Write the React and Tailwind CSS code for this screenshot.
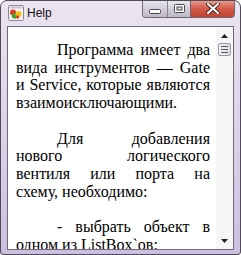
import React from 'react';

function AppIcon() {
    return (
        <svg width="16" height="16" viewBox="0 0 16 16">
            <rect x="0.5" y="0.5" width="15" height="15" rx="1" fill="#f4f2f6" stroke="#8d8a94" />
            <rect x="1.5" y="1.5" width="13" height="2" fill="#c9c4d2" />
            <circle cx="5" cy="7.5" r="3" fill="#e0392b" />
            <circle cx="6.5" cy="11" r="2.7" fill="#3ea33a" />
            <circle cx="10.5" cy="9" r="3" fill="#f2c21b" />
            <circle cx="9.5" cy="12" r="1.8" fill="#d84a22" />
        </svg>
    );
}

function CaptionButtons() {
    return (
        <div className="flex h-[18px] mr-[5px] -mt-px rounded-b-[4px] overflow-hidden border border-[#6c6775] border-t-0">
            <div className="w-[25px] flex items-center justify-center bg-linear-to-b from-[#ece9f0] to-[#bdb7c6] border-r border-[#8a8592]">
                <svg width="12" height="5" viewBox="0 0 12 5" className="mt-[5px]">
                    <rect x="0.5" y="0.5" width="11" height="4" rx="1" fill="#fff" stroke="#4a4652" />
                </svg>
            </div>
            <div className="w-[23px] flex items-center justify-center bg-linear-to-b from-[#ece9f0] to-[#bdb7c6] border-r border-[#6c6775]">
                <svg width="11" height="9" viewBox="0 0 11 9">
                    <rect x="0.5" y="0.5" width="10" height="8" rx="1" fill="#fff" stroke="#4a4652" />
                    <rect x="3" y="3" width="5" height="3" fill="#ddd9e2" stroke="#4a4652" strokeWidth="1" />
                </svg>
            </div>
            <div className="w-[43px] flex items-center justify-center bg-linear-to-b from-[#e9a296] via-[#d25a49] to-[#c2402f]">
                <svg width="14" height="11" viewBox="0 0 14 11">
                    <path d="M2 1 L12 10 M12 1 L2 10" stroke="#4a2b26" strokeWidth="4" strokeLinecap="round" />
                    <path d="M2 1 L12 10 M12 1 L2 10" stroke="#fff" strokeWidth="2" strokeLinecap="round" />
                </svg>
            </div>
        </div>
    );
}

function ScrollBar() {
    return (
        <div className="w-[17px] bg-[#f6f6f7] flex flex-col items-center">
            <div className="h-[15px] w-full flex items-center justify-center">
                <svg width="7" height="4" viewBox="0 0 7 4" className="mt-[3px]">
                    <path d="M3.5 0 L7 4 L0 4 Z" fill="#222" />
                </svg>
            </div>
            <div className="w-[13px] h-[13px] mt-px rounded-[2px] border border-[#9a9aa2] bg-linear-to-r from-[#f4f4f6] to-[#dcdce2] flex flex-col items-center justify-center gap-[2px]">
                <div className="w-[7px] h-px bg-[#55555c]" />
                <div className="w-[7px] h-px bg-[#55555c]" />
                <div className="w-[7px] h-px bg-[#55555c]" />
            </div>
            <div className="flex-1" />
            <div className="h-[15px] w-full flex items-center justify-center">
                <svg width="7" height="4" viewBox="0 0 7 4" className="mb-[1px]">
                    <path d="M0 0 L7 0 L3.5 4 Z" fill="#222" />
                </svg>
            </div>
        </div>
    );
}

// one justified line of the rich text box
function Line({ children, first, last }) {
    return (
        <span
            className={
                'block whitespace-nowrap ' +
                (last ? 'text-left ' : 'text-justify [text-align-last:justify] ') +
                (first ? 'pl-[41px]' : '')
            }
        >
            {children}
        </span>
    );
}

export default function App() {
    return (
        <div className="w-[241px] h-[255px] flex flex-col rounded-t-[7px] rounded-b-[3px] border border-[#4f4a58] bg-linear-to-b from-[#ebe4f1] via-[#ddd3e9] to-[#cdbfe0] overflow-hidden">
            <div className="h-[25px] flex items-start shrink-0">
                <div className="flex items-center ml-[7px] mt-[4px] gap-[3px]">
                    <AppIcon />
                    <span className="font-['Liberation_Sans',sans-serif] text-[12px] text-[#111] leading-none">Help</span>
                </div>
                <div className="ml-auto">
                    <CaptionButtons />
                </div>
            </div>
            <div className="flex-1 flex mx-[6px] mb-[4px] border border-[#6f6c78] bg-white overflow-hidden">
                <div className="flex-1 pl-[8px] pr-[6px] pt-[14px] overflow-hidden font-['Liberation_Serif',serif] text-[16px] leading-[17.7px] text-black">
                    <p>
                        <Line first>Программа имеет два</Line>
                        <Line>вида инструментов — Gate</Line>
                        <Line>и Service, которые являются</Line>
                        <Line last>взаимоисключающими.</Line>
                    </p>
                    <p className="h-[17.7px]" />
                    <p>
                        <Line first>Для добавления</Line>
                        <Line>нового логического</Line>
                        <Line>вентиля или порта на</Line>
                        <Line last>схему, необходимо:</Line>
                    </p>
                    <p className="h-[17.7px]" />
                    <p>
                        <Line first>- выбрать объект в</Line>
                        <Line last>одном из ListBox`ов:</Line>
                    </p>
                </div>
                <ScrollBar />
            </div>
        </div>
    );
}
